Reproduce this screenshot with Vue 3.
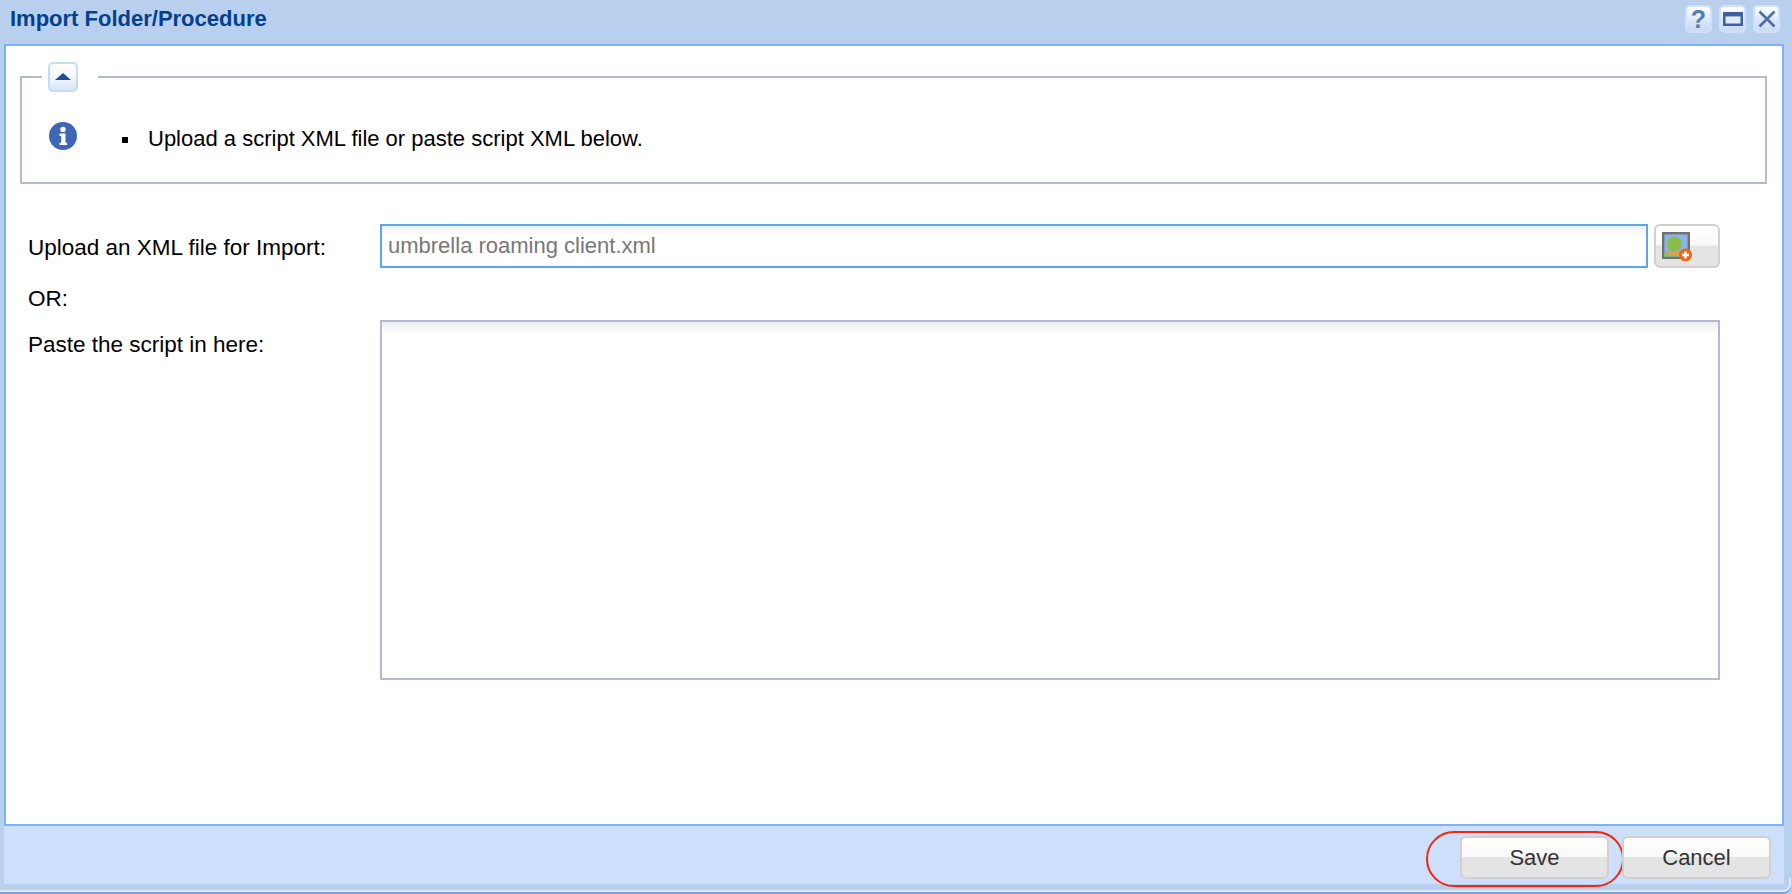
<script setup>
const note = 'Upload a script XML file or paste script XML below.'
</script>

<template>
  <div class="win">
    <header class="titlebar">
      <h1 class="title">Import Folder/Procedure</h1>
      <div class="tools">
        <button class="tool"><span class="q">?</span></button>
        <button class="tool">
          <svg width="20" height="14" viewBox="0 0 20 14"><rect x="1.25" y="1.25" width="17.5" height="11.5" fill="#dfeafb" stroke="#3f5f9f" stroke-width="2.5"/><rect x="1" y="1" width="18" height="3.4" fill="#3f5f9f"/></svg>
        </button>
        <button class="tool">
          <svg width="18" height="18" viewBox="0 0 18 18"><path d="M1.5 1.5 L16.5 16.5 M16.5 1.5 L1.5 16.5" stroke="#4f6ea8" stroke-width="2.6" fill="none"/></svg>
        </button>
      </div>
    </header>

    <main class="content">
      <section class="fieldset">
        <div class="legend">
          <button class="toggle"><span class="arrow"></span></button>
        </div>
        <div class="note">
          <svg class="info" width="30" height="30" viewBox="0 0 30 30">
            <circle cx="15" cy="15" r="14" fill="#4066b8"/>
            <circle cx="15" cy="8.4" r="2.7" fill="#fff"/>
            <path d="M11.5 12.5h6v9.2h1.6v2.4h-7.6v-2.4h1.7v-6.8h-1.7z" fill="#fff"/>
          </svg>
          <ul class="list"><li>{{ note }}</li></ul>
        </div>
      </section>

      <form class="form" @submit.prevent>
        <label class="lbl upl">Upload an XML file for Import:</label>
        <div class="upload">
          <div class="file">umbrella roaming client.xml</div>
          <button class="browse">
            <svg width="32" height="30" viewBox="0 0 32 30">
              <rect x="1.2" y="2.2" width="25.6" height="24.6" fill="#8db4e6" stroke="#707070" stroke-width="2.4"/>
              <rect x="2.4" y="20" width="23.2" height="5.6" fill="#8fc060"/>
              <rect x="6" y="21" width="15" height="3" fill="#dda050"/>
              <circle cx="12.5" cy="13" r="7.5" fill="#8dbb4a"/>
              <circle cx="23.5" cy="24" r="6.5" fill="#f2640f"/>
              <path d="M23.5 20.5v7M20 24h7" stroke="#fff" stroke-width="2.4"/>
            </svg>
          </button>
        </div>
        <label class="lbl or">OR:</label>
        <div></div>
        <label class="lbl paste">Paste the script in here:</label>
        <div class="area"></div>
      </form>
    </main>

    <footer class="footer">
      <div class="actions">
        <button class="btn save">Save<span class="ring"></span></button>
        <button class="btn">Cancel</button>
      </div>
    </footer>
    <div class="edge"></div>
  </div>
</template>

<style>
html, body { margin: 0; background: #fff; overflow: hidden; }
</style>

<style scoped>
.win {
  position: relative;
  width: 1792px;
  height: 894px;
  display: flex;
  flex-direction: column;
  background: #b8cfee;
  font-family: "Liberation Sans", Arial, sans-serif;
  color: #000;
  box-sizing: border-box;
  overflow: hidden;
}
button { font-family: inherit; padding: 0; cursor: pointer; }

.titlebar {
  height: 44px;
  flex: none;
  display: flex;
  align-items: center;
  justify-content: space-between;
  padding: 0 12px 6px 10px;
  box-sizing: border-box;
}
.title { margin: 0; font-size: 22px; font-weight: 700; color: #04408c; }
.tools { display: flex; gap: 7px; }
.tool {
  width: 27px; height: 28px;
  border: 2px solid #cfe0f7;
  border-radius: 5px;
  background: linear-gradient(#ffffff, #dbe7f8 55%, #c7daf4);
  display: flex; align-items: center; justify-content: center;
}
.q { font-size: 25px; font-weight: 700; color: #5580b0; line-height: 1; }

.content {
  flex: none;
  height: 782px;
  margin: 0 8px 0 4px;
  border: 2px solid #7db3f6;
  background: #fff;
  box-sizing: border-box;
  padding: 30px 15px 0 14px;
}
.fieldset {
  position: relative;
  height: 108px;
  border: 2px solid #b5b8d0;
  box-sizing: border-box;
}
.legend {
  position: absolute;
  left: 20px; top: -16px;
  width: 56px; height: 30px;
  background: #fff;
  display: flex;
  padding-left: 6px;
  box-sizing: border-box;
}
.toggle {
  width: 30px; height: 30px;
  border: 2px solid #c4dcf8;
  border-radius: 5px;
  background: linear-gradient(#fff, #eef5fd 60%, #d6e6fa);
  display: flex; align-items: center; justify-content: center;
}
.arrow {
  width: 0; height: 0;
  border-left: 8px solid transparent;
  border-right: 8px solid transparent;
  border-bottom: 7px solid #26489c;
  margin-top: -1px;
}
.note {
  display: flex;
  align-items: flex-start;
  padding: 42px 0 0 26px;
}
.info { flex: none; margin-top: 1px; }
.list {
  list-style: none;
  margin: 6px 0 0;
  padding: 0 0 0 70px;
  font-size: 22px;
  line-height: 26px;
}
.list li { position: relative; }
.list li::before {
  content: "";
  position: absolute;
  left: -26px;
  top: 11px;
  width: 6px;
  height: 6px;
  background: #000;
}
.form {
  display: grid;
  grid-template-columns: 352px 1340px;
  grid-template-rows: 44px 52px 360px;
  margin-top: 40px;
  padding-left: 8px;
}
.lbl { font-size: 22.5px; line-height: 26px; align-self: center; }
.upl { margin-top: 3px; }
.or { align-self: start; padding-top: 18px; }
.paste { align-self: start; margin-top: 12px; }
.upload { display: flex; gap: 6px; }
.file {
  flex: 1;
  border: 2px solid #5aa6ef;
  box-sizing: border-box;
  padding: 0 6px;
  color: #777;
  font-size: 22px;
  line-height: 40px;
  background: linear-gradient(#eef0f0, #fff 10px);
}
.browse {
  width: 66px;
  border: 2px solid #d0d0d0;
  border-radius: 6px;
  background: linear-gradient(#fff 0, #f8f8f8 48%, #e4e4e4 50%, #e4e4e4 100%);
  display: flex; align-items: center;
  padding-left: 6px;
  box-sizing: border-box;
}
.area {
  grid-column: 2;
  border: 2px solid #b5b8d0;
  box-sizing: border-box;
  background: linear-gradient(#eceeee, #fff 12px);
}

.footer {
  flex: none;
  height: 58px;
  margin: 0 8px 0 4px;
  background: #cddffb;
  display: flex;
  justify-content: flex-end;
  padding: 10px 13px 0 0;
  box-sizing: border-box;
}
.actions { display: flex; gap: 13px; height: 43px; }
.btn {
  position: relative;
  width: 149px;
  height: 43px;
  border: 2px solid #d0d0d0;
  border-radius: 6px;
  background: linear-gradient(#fff 0, #f8f8f8 48%, #e4e4e4 50%, #e4e4e4 100%);
  font-size: 22px;
  color: #333;
}
.ring {
  position: absolute;
  left: -36px; top: -7px;
  width: 198px; height: 56px;
  border: 2px solid #f4260f;
  border-radius: 30px;
  box-sizing: border-box;
  pointer-events: none;
}
.edge {
  position: absolute;
  left: 0; right: 1px; bottom: 2px;
  height: 14px;
  border-bottom: 2px solid #dfeafb;
  border-right: 2px solid #dfeafb;
  border-bottom-right-radius: 8px;
  box-sizing: border-box;
  box-shadow: 0 2px 0 #7f9fd8;
}
</style>
